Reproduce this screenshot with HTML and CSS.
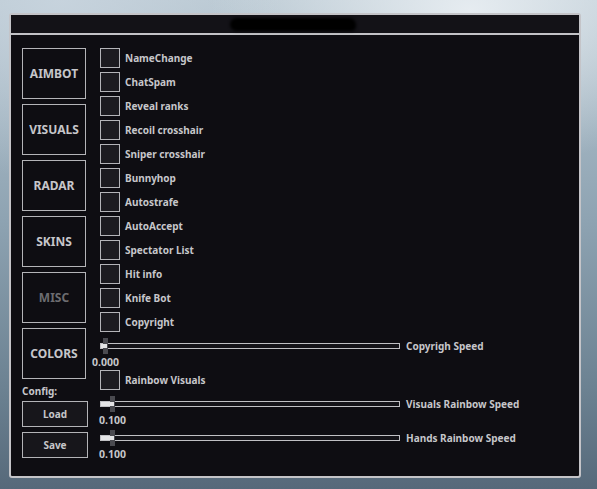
FILE: index.html
```html
<!DOCTYPE html>
<html lang="en">
<head>
  <meta charset="UTF-8" />
  <title>Menu</title>
  <link rel="stylesheet" href="styles.css">
</head>
<body>
  <div class="window">
    <div class="titlebar"><span class="title-blob"></span></div>

    <div class="content">
      <!-- left side: tabs + config -->
      <div class="side">
        <div class="tab">AIMBOT</div>
        <div class="tab">VISUALS</div>
        <div class="tab">RADAR</div>
        <div class="tab">SKINS</div>
        <div class="tab active">MISC</div>
        <div class="tab">COLORS</div>
        <div class="config-label">Config:</div>
        <div class="btn">Load</div>
        <div class="btn">Save</div>
      </div>

      <!-- right side: options -->
      <div class="options">
        <label class="check"><span class="box"></span>NameChange</label>
        <label class="check"><span class="box"></span>ChatSpam</label>
        <label class="check"><span class="box"></span>Reveal ranks</label>
        <label class="check"><span class="box"></span>Recoil crosshair</label>
        <label class="check"><span class="box"></span>Sniper crosshair</label>
        <label class="check"><span class="box"></span>Bunnyhop</label>
        <label class="check"><span class="box"></span>Autostrafe</label>
        <label class="check"><span class="box"></span>AutoAccept</label>
        <label class="check"><span class="box"></span>Spectator List</label>
        <label class="check"><span class="box"></span>Hit info</label>
        <label class="check"><span class="box"></span>Knife Bot</label>
        <label class="check"><span class="box"></span>Copyright</label>

        <div class="slider s1">
          <div class="slider-row">
            <div class="track">
              <span class="thumb" style="left: 2px;"></span>
              <span class="fill" style="width: 6px;"></span>
            </div>
            <span class="slider-name">Copyrigh Speed</span>
          </div>
          <div class="value"><span style="margin-left: -8px;">0.000</span></div>
        </div>

        <label class="check rainbow"><span class="box"></span>Rainbow Visuals</label>

        <div class="slider s2">
          <div class="slider-row">
            <div class="track">
              <span class="thumb" style="left: 9px;"></span>
              <span class="fill" style="width: 13px;"></span>
            </div>
            <span class="slider-name">Visuals Rainbow Speed</span>
          </div>
          <div class="value"><span style="margin-left: -1px;">0.100</span></div>
        </div>

        <div class="slider s3">
          <div class="slider-row">
            <div class="track">
              <span class="thumb" style="left: 9px;"></span>
              <span class="fill" style="width: 13px;"></span>
            </div>
            <span class="slider-name">Hands Rainbow Speed</span>
          </div>
          <div class="value"><span style="margin-left: -1px;">0.100</span></div>
        </div>
      </div>
    </div>
  </div>
</body>
</html>
```

FILE: styles.css
```css
body {
  margin: 0;
  padding: 0;
  width: 597px;
  height: 489px;
  overflow: hidden;
  font-family: "Noto Sans", "DejaVu Sans", sans-serif;
  font-weight: bold;
  color: #c6c6ca;
  background:
    radial-gradient(ellipse 260px 160px at 470px 10px, rgba(235, 240, 244, 0.9), rgba(235, 240, 244, 0) 100%),
    radial-gradient(ellipse 220px 180px at 60px 0px, rgba(200, 212, 222, 0.9), rgba(200, 212, 222, 0) 100%),
    linear-gradient(180deg, #b9c8d2 0%, #8ea3b2 45%, #6b8191 80%, #56697a 100%);
}

.window {
  margin: 13px 0 0 9px;
  width: 568px;
  height: 461px;
  border: 2px solid #c4c4c8;
  border-radius: 3px;
  background-color: #0e0d12;
  display: flex;
  flex-direction: column;
}

.titlebar {
  height: 18px;
  background-color: #131217;
  border-bottom: 2px solid #c2c2c6;
  display: flex;
  justify-content: center;
  align-items: center;
}
.title-blob {
  display: block;
  width: 126px;
  height: 13px;
  margin-left: -4px;
  background-color: #000;
  border-radius: 7px 7px 5px 7px;
  filter: blur(1.5px);
}

.content {
  display: grid;
  grid-template-columns: 66px 1fr;
  column-gap: 12px;
  padding: 13px 0 0 11px;
}

/* tabs */
.side { display: flex; flex-direction: column; }
.tab {
  width: 62px;
  height: 49px;
  border: 1px solid #b4b4b8;
  margin-bottom: 5px;
  display: flex;
  align-items: center;
  justify-content: center;
  font-size: 12px;
}
.tab.active { color: #6c6c70; }
.config-label {
  font-size: 10px;
  line-height: 14px;
  height: 14px;
}
.btn {
  width: 64px;
  height: 24px;
  border: 1px solid #b4b4b8;
  background-color: #17161b;
  display: flex;
  align-items: center;
  justify-content: center;
  font-size: 10px;
  margin-top: 5px;
}
.config-label + .btn { margin-top: 3px; }

/* options */
.options { display: flex; flex-direction: column; }
.check {
  display: flex;
  align-items: center;
  height: 20px;
  margin-bottom: 4px;
  font-size: 10px;
}
.box {
  width: 18px;
  height: 18px;
  border: 1px solid #b4b4b8;
  background-color: #1c1b20;
  margin-right: 5px;
  flex: none;
}
.check.rainbow { margin-top: 2px; margin-bottom: 0; }

.slider { display: flex; flex-direction: column; }
.s1 { margin-top: 2px; }
.s2 { margin-top: 6px; }
.s3 { margin-top: 4px; }
.slider-row {
  display: flex;
  align-items: center;
  height: 16px;
}
.track {
  position: relative;
  width: 298px;
  height: 4px;
  border: 1px solid #c0c0c4;
  background-color: #141318;
}
.thumb {
  position: absolute;
  top: -6px;
  width: 5px;
  height: 16px;
  background-color: #4a4a50;
}
.fill {
  position: absolute;
  left: 0;
  top: 0;
  height: 4px;
  background-color: #e4e4e6;
}
.slider-name {
  font-size: 10px;
  margin-left: 6px;
}
.value {
  font-size: 10.5px;
  line-height: 12px;
  height: 12px;
  margin-top: 2px;
}
.value span { display: inline-block; }
```
